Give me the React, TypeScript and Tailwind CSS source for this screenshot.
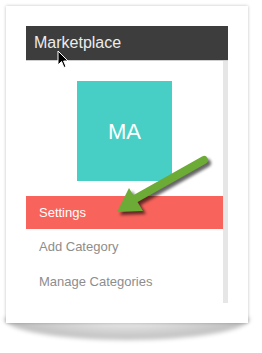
import React from "react";

export default function App() {
  return (
    <div className="relative w-[262px] h-[353px] bg-white overflow-hidden" style={{ fontFamily: '"Liberation Sans", Arial, sans-serif' }}>
      {/* curved bottom shadow */}
      <div className="absolute left-[4px] top-[318px] w-[246px] h-[22px] rounded-b-[50%_100%] bg-[radial-gradient(ellipse_at_50%_0%,rgba(0,0,0,0.05)_0%,rgba(0,0,0,0.25)_70%,rgba(0,0,0,0.35)_100%)] blur-[2px]" />
      <div className="relative ml-[6px] mt-[6px] w-[242px] h-[317px] bg-white shadow-[0_0_3px_rgba(0,0,0,0.25)] pt-[20px] pl-[20px]">
        <div className="w-[202px]">
          <div className="h-[35px] bg-[#3d3d3d] border-b border-[#cfcfcf] flex items-center pl-[8px] text-[16px] text-[#ececec]">
            Marketplace
          </div>
          <div className="h-[242px] border-r-[5px] border-[#e6e6e6] flex flex-col">
            <div className="h-[120px] pt-[20px] flex justify-center">
              <div className="w-[95px] h-[100px] bg-[#48cfc5] flex items-center justify-center text-white text-[22px]">
                MA
              </div>
            </div>
            <div className="mt-[15px] h-[33px] bg-[#f8635b] flex items-center pl-[13px] text-[13px] text-white">
              Settings
            </div>
            <div className="h-[35px] flex items-center pl-[13px] text-[13px] text-[#8d8d8d]">Add Category</div>
            <div className="h-[35px] flex items-center pl-[13px] text-[13px] text-[#8d8d8d]">Manage Categories</div>
          </div>
        </div>
      </div>
      {/* green arrow */}
      <svg className="absolute left-0 top-0" width="262" height="353" viewBox="0 0 262 353">
        <defs>
          <filter id="sh" x="-20%" y="-20%" width="140%" height="140%">
            <feGaussianBlur stdDeviation="1.5" />
          </filter>
        </defs>
        <g transform="translate(3,3)" filter="url(#sh)" opacity="0.6">
          <line x1="204" y1="160" x2="133" y2="200" stroke="#000" strokeWidth="8" strokeLinecap="round" />
          <polygon points="117,212 129,188 143,211" fill="#000" />
        </g>
        <line x1="204" y1="160" x2="133" y2="200" stroke="#6cab36" strokeWidth="8" strokeLinecap="round" />
        <polygon points="117,212 129,188 143,211" fill="#6cab36" />
      </svg>
      {/* cursor */}
      <svg className="absolute left-[57px] top-[50px]" width="12" height="19" viewBox="0 0 12 19">
        <path d="M1 1 L1 15 L4.5 11.5 L7 17.5 L9 16.6 L6.6 11 L11 11 Z" fill="#000" stroke="#fff" strokeWidth="1" />
      </svg>
    </div>
  );
}
